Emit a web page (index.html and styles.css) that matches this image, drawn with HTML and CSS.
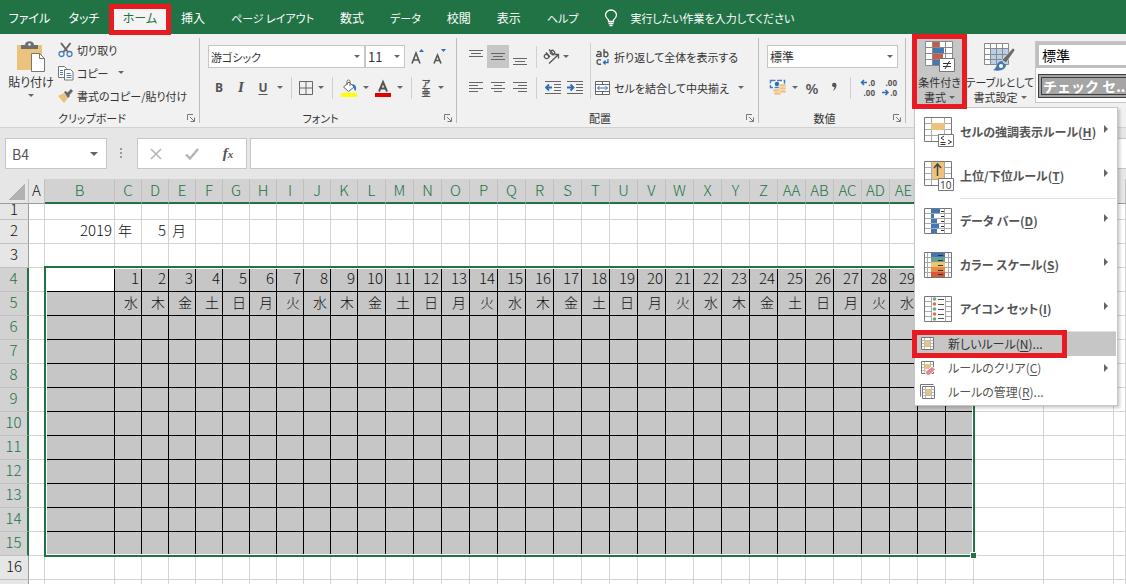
FILE: index.html
```
<!DOCTYPE html>
<html lang="ja">
<head>
<meta charset="utf-8">
<title>Excel</title>
<link rel="stylesheet" href="styles.css">
</head>
<body>
<nav class="tabs">
  <button class="tab tab-file">ファイル</button>
  <button class="tab tab-touch">タッチ</button>
  <button class="tab tab-active">ホーム</button>
  <button class="tab">挿入</button>
  <button class="tab tab-kana">ページ レイアウト</button>
  <button class="tab">数式</button>
  <button class="tab tab-kana">データ</button>
  <button class="tab">校閲</button>
  <button class="tab">表示</button>
  <button class="tab tab-kana">ヘルプ</button>
  <button class="tab tab-kana tell-me">
    <svg width="14" height="18" viewBox="0 0 14 18" fill="none" stroke="#fff" stroke-width="1.3"><path d="M4.5 12.5V11C3 9.500 1.500 8.500 1.500 6a5.500 5 0 0 1 11 0c0 2.500-1.500 3.500-3 5v1.500zM4.500 14.500h5M5.500 16.500h3"/></svg>
    実行したい作業を入力してください</button>
</nav>

<header class="ribbon">
  <section class="group g-clip">
    <div class="group-body">
      <button class="paste">
        <svg width="30" height="32" viewBox="0 0 30 32"><path d="M1 4h25v25H1z" fill="#ecc27c"/><path d="M5 8V4h4c0-5 9-5 9 0h4v4z" fill="#6d6d6d"/><circle cx="13.500" cy="3.500" r="1.300" fill="#f1f1f1"/><path d="M15.500 12.500h8l5 5v13h-13z" fill="#fff" stroke="#777"/><path d="M23.500 12.500v5h5" fill="none" stroke="#777"/></svg>
        <span>貼り付け</span><i class="caret"></i>
      </button>
      <div class="stack">
        <button class="cmd"><svg width="16" height="16" viewBox="0 0 16 16" fill="none"><path d="M3 1l7 9M12.500 1L5.500 10" stroke="#666" stroke-width="2"/><circle cx="3.500" cy="12" r="2.500" stroke="#4a7ebb" stroke-width="1.300"/><circle cx="11.500" cy="12" r="2.500" stroke="#4a7ebb" stroke-width="1.300"/></svg>切り取り</button>
        <button class="cmd"><svg width="16" height="16" viewBox="0 0 16 16" fill="#fff" stroke="#777"><path d="M.5 1.500h6l2 2v9h-8z"/><path d="M6.500 4.500h6l2.500 2.500v8H6.500z"/><path d="M2 5.500h3M2 7.500h3M2 9.500h3M8.500 8.500h4M8.500 10.500h5M8.500 12.500h5" stroke="#4a7ebb"/></svg>コピー<i class="caret caret-gap"></i></button>
        <button class="cmd"><svg width="16" height="16" viewBox="0 0 16 16"><path d="M0 8l6-3 4 5-4 5z" fill="#ecc27c"/><path d="M6 4l2-1 4 5-2 2zM9 5l4-4 2 2-3.500 4z" fill="#666"/></svg>書式のコピー/貼り付け</button>
      </div>
    </div>
    <footer class="caption">クリップボード<svg class="launch" width="9" height="9" viewBox="0 0 9 9" fill="none" stroke="#777"><path d="M.5 6V.5H6M3 3l4 4M7.500 3.500v4h-4"/></svg></footer>
  </section>

  <section class="group g-font">
    <div class="group-body col">
      <div class="line">
        <select class="combo combo-font" aria-label="フォント"><option>游ゴシック</option></select>
        <select class="combo combo-size" aria-label="サイズ"><option>11</option></select>
        <button class="tool w22 grow-a" aria-label="拡大"><svg width="14" height="17" viewBox="0 0 14 17"><path d="M1 15.500L5 5l4 10.500M2.500 12h5" fill="none" stroke="#555" stroke-width="1.600"/><path d="M8 4l2.500-3L13 4z" fill="#2f6db5"/></svg></button>
        <button class="tool w22" aria-label="縮小"><svg width="14" height="17" viewBox="0 0 14 17"><path d="M1 15.500L4.500 7 8 15.500M2.500 12.500h4" fill="none" stroke="#555" stroke-width="1.600"/><path d="M8 1l2.500 3L13 1z" fill="#2f6db5"/></svg></button>
      </div>
      <div class="line">
        <button class="tool w22 bold">B</button><button class="tool w22 ital">I</button><button class="tool w22 under">U</button><button class="tool w12" aria-label="下線"><i class="caret"></i></button>
        <i class="vsep"></i>
        <button class="tool w18" aria-label="罫線"><svg width="14" height="14" viewBox="0 0 14 14" fill="none" stroke="#666"><path d="M.5.5h13v13H.5zM7 0v14M0 7h14"/></svg></button><button class="tool w12" aria-label="罫線の種類"><i class="caret"></i></button>
        <i class="vsep"></i>
        <button class="tool w22" aria-label="塗りつぶし"><svg width="16" height="18" viewBox="0 0 16 18"><path d="M0 14h16v4H0z" fill="#ff0"/><path d="M2.500 8L8 3l5 5-5.500 4.500zM6 6V2.500C6 .5 9 .5 9 2.500V7" fill="#fff" stroke="#666"/><path d="M11 5c4 0 5 4 3.500 7-2-1-1-4-3.500-7z" fill="#3a75b8"/></svg></button><button class="tool w12" aria-label="塗りつぶしの色"><i class="caret"></i></button>
        <button class="tool w22" aria-label="文字色"><svg width="16" height="18" viewBox="0 0 16 18"><path d="M0 14h16v4H0z" fill="#e00000"/><path d="M4 12.500L8 3l4 9.500M5.500 9.500h5" fill="none" stroke="#555" stroke-width="2"/></svg></button><button class="tool w12" aria-label="フォントの色"><i class="caret"></i></button>
        <i class="vsep"></i>
        <button class="tool w18 ruby"><span>ア</span><span>亜</span></button><button class="tool w12" aria-label="ふりがな"><i class="caret"></i></button>
      </div>
    </div>
    <footer class="caption">フォント<svg class="launch" width="9" height="9" viewBox="0 0 9 9" fill="none" stroke="#777"><path d="M.5 6V.5H6M3 3l4 4M7.500 3.500v4h-4"/></svg></footer>
  </section>

  <section class="group g-align">
    <div class="group-body">
      <div class="col">
        <div class="line">
          <button class="tool w22" aria-label="上揃え"><svg width="14" height="20" viewBox="0 0 14 20" stroke="#666"><path d="M0 3.500h14M2 6.500h10M0 9.500h14"/></svg></button><button class="tool w22 on" aria-label="上下中央揃え"><svg width="14" height="20" viewBox="0 0 14 20" stroke="#666"><path d="M0 6.500h14M2 9.500h10M0 12.500h14"/></svg></button><button class="tool w22" aria-label="下揃え"><svg width="14" height="20" viewBox="0 0 14 20" stroke="#666"><path d="M0 11.500h14M2 14.500h10M0 17.500h14"/></svg></button>
          <i class="vsep"></i>
          <button class="tool w18" aria-label="方向"><svg width="17" height="17" viewBox="0 0 17 17"><g fill="none" stroke="#555" stroke-width="1.300"><ellipse cx="3.500" cy="8.500" rx="2" ry="2.300" transform="rotate(-45 3.500 8.500)"/><path d="M3 4.500l4 4.500M6 1.500l5 5.500"/><ellipse cx="9.500" cy="4.500" rx="2" ry="2.300" transform="rotate(-45 9.500 4.500)"/><path d="M6 15.500l9-8.500M11.500 6.500h4v4"/></g></svg></button><button class="tool w12" aria-label="方向の種類"><i class="caret"></i></button>
        </div>
        <div class="line">
          <button class="tool w22" aria-label="左揃え"><svg width="14" height="14" viewBox="0 0 14 14" stroke="#666"><path d="M0 1.500h14M0 4.500h9M0 7.500h14M0 10.500h9"/></svg></button><button class="tool w22" aria-label="中央揃え"><svg width="14" height="14" viewBox="0 0 14 14" stroke="#666"><path d="M0 1.500h14M3 4.500h8M0 7.500h14M3 10.500h8"/></svg></button><button class="tool w22" aria-label="右揃え"><svg width="14" height="14" viewBox="0 0 14 14" stroke="#666"><path d="M0 1.500h14M5 4.500h9M0 7.500h14M5 10.500h9"/></svg></button>
          <i class="vsep"></i>
          <button class="tool w22" aria-label="インデントを減らす"><svg width="16" height="14" viewBox="0 0 16 14" fill="none" stroke="#666"><path d="M0 .5h16M9 3.500h7M9 6.500h7M9 9.500h7M0 12.500h16"/><path d="M7 6.500H1.500M4 3.500l-3 3 3 3" stroke="#2f6db5" stroke-width="1.800"/></svg></button><button class="tool w22" aria-label="インデントを増やす"><svg width="16" height="14" viewBox="0 0 16 14" fill="none" stroke="#666"><path d="M0 .5h16M9 3.500h7M9 6.500h7M9 9.500h7M0 12.500h16"/><path d="M0 6.500h6M3.500 3.500l3 3-3 3" stroke="#2f6db5" stroke-width="1.800"/></svg></button>
        </div>
      </div>
      <i class="vsep tall"></i>
      <div class="col">
        <div class="line"><button class="cmd"><svg width="16" height="18" viewBox="0 0 16 18" fill="none"><g stroke="#555" stroke-width="1.400"><path d="M2 4c2-1 4-.5 4 1v4M6 6C3 6 1.500 6.500 1.500 7.500S5 9.500 6 7.500M9 1v8M9 5c2-2 4-.5 4 1.500S11 9.500 9 8M6 12c-2.500-1-4 0-4 2s2 3 4 2"/></g><path d="M13 11v3.500H8.500M10.500 12.500l-2 2 2 2" stroke="#2f6db5" stroke-width="1.300"/></svg>折り返して全体を表示する</button></div>
        <div class="line"><button class="cmd"><svg width="16" height="16" viewBox="0 0 16 16" fill="#fff" stroke="#666"><path d="M.5 1.500h14v13H.5zM.5 4.500h14M.5 11.500h14M7.500 1.500v3M7.500 11.500v3"/><path d="M2.500 8h10M4.500 6l-2 2 2 2M10.500 6l2 2-2 2" fill="none" stroke="#2f6db5"/></svg>セルを結合して中央揃え<i class="caret caret-gap"></i></button></div>
      </div>
    </div>
    <footer class="caption">配置<svg class="launch" width="9" height="9" viewBox="0 0 9 9" fill="none" stroke="#777"><path d="M.5 6V.5H6M3 3l4 4M7.500 3.500v4h-4"/></svg></footer>
  </section>

  <section class="group g-num">
    <div class="group-body col">
      <div class="line"><select class="combo combo-num" aria-label="表示形式"><option>標準</option></select></div>
      <div class="line">
        <button class="tool w22" aria-label="通貨"><svg width="18" height="17" viewBox="0 0 18 17"><path d="M1.500 1.500h14v7h-14z" fill="#fff" stroke="#4a7ebb" stroke-width="1.500" stroke-dasharray="5 1.500"/><circle cx="8" cy="5" r="2.300" fill="#2f6db5"/><g fill="#ecc27c" stroke="#f1f1f1" stroke-width=".6"><rect x="10" y="5" width="7" height="3" rx="1"/><rect x="10" y="8" width="7" height="3" rx="1"/><rect x="10" y="11" width="7" height="3" rx="1"/><rect x="4" y="10" width="7" height="3" rx="1"/><rect x="5" y="13" width="7" height="3" rx="1"/></g></svg></button><button class="tool w12" aria-label="通貨の種類"><i class="caret"></i></button><button class="tool w22 percent">%</button><button class="tool w22" aria-label="桁区切り"><svg width="7" height="12" viewBox="0 0 7 12"><path d="M1 3a2 2 0 1 1 4.500 0C5.500 6 4 8 1.500 9 3 7.500 3.500 6 3.500 5 2 5 1 4.500 1 3z" fill="#555"/></svg></button>
        <i class="vsep"></i>
        <button class="tool w22 dec"><span><svg class="dec-arrow" width="8" height="7" viewBox="0 0 8 7"><path d="M7 3.500H1.500M4 1L1.500 3.500 4 6"/></svg>.0</span><span>.00</span></button><button class="tool w22 dec"><span>.00</span><span><svg class="dec-arrow" width="8" height="7" viewBox="0 0 8 7"><path d="M0 3.500h6M3.500 1L6 3.500 3.500 6"/></svg>.0</span></button>
      </div>
    </div>
    <footer class="caption">数値<svg class="launch" width="9" height="9" viewBox="0 0 9 9" fill="none" stroke="#777"><path d="M.5 6V.5H6M3 3l4 4M7.500 3.500v4h-4"/></svg></footer>
  </section>

  <section class="group g-style">
    <div class="cond-wrap">
      <button class="big cond">
        <svg width="30" height="31" viewBox="0 0 30 31"><path d="M.5.5h27v24H.5z" fill="#fff"/><path d="M.5.5h27v24H.5zM.5 6.500h27M.5 12.500h27M.5 18.500h27M7.500 0v24M14.500 0v24M20.500 0v24" fill="none" stroke="#8a8a8a"/><path d="M8 1h6v5H8zM8 13h10v5H8z" fill="#cc5b45"/><path d="M8 7h11v5H8zM8 19h6v5H8z" fill="#3f78b4"/><path d="M14.500 17.500h15v13h-15z" fill="#fff" stroke="#777"/><path d="M18 22.500h8M18 25.500h8M24.500 20l-4.500 8" stroke="#333" fill="none"/></svg>
        <span>条件付き</span><span>書式<i class="caret"></i></span>
      </button>
      <div class="menu" role="menu">
        <button class="item large"><svg width="31" height="31" viewBox="0 0 31 31"><path d="M.5.5h27v24H.5z" fill="#fff"/><path d="M.5 6.500h27M.5 12.500h27M.5 18.500h27M7.500 0v24M20.500 0v24" fill="none" stroke="#aaa"/><path d="M.5.5h27v24H.5z" fill="none" stroke="#777"/><path d="M7 6h14v7H7z" fill="#ecc27c" /><path d="M14.500 17.500h15v12h-15z" fill="#fff" stroke="#777"/><path d="M20 19l-3 2 3 2M16.500 25.500h5M16.500 27.500h5M24 23l3.500 2-3.500 2" stroke="#333" fill="none"/></svg><span>セルの強調表示ルール(<u>H</u>)</span><i class="arrow"></i></button>
        <button class="item large"><svg width="31" height="31" viewBox="0 0 31 31"><path d="M.5.5h27v24H.5z" fill="#fff"/><path d="M7 1h14v18H7z" fill="#ecc27c"/><path d="M.5 6.500h27M.5 12.500h27M.5 18.500h27M7.500 0v24M20.500 0v24" fill="none" stroke="#aaa"/><path d="M8 1h12v17H8z" fill="#ecc27c"/><path d="M.5.5h27v24H.5z" fill="none" stroke="#777"/><path d="M13.500 15V3M10 7l3.500-4L17 7" fill="none" stroke="#444" stroke-width="1.500"/><path d="M14.500 17.500h15v12h-15z" fill="#fff" stroke="#777"/><text x="16" y="28" class="ten">10</text></svg><span>上位/下位ルール(<u>T</u>)</span><i class="arrow"></i></button>
        <hr class="indent">
        <button class="item large"><svg width="31" height="26" viewBox="0 0 31 26"><path d="M.5.5h27v25H.5z" fill="#fff"/><path d="M.5 5.500h27M.5 10.500h27M.5 15.500h27M.5 20.500h27M7.500 0v25M20.500 0v25" stroke="#aaa"/><path d="M7 1h9v4H7zM7 6h3v4H7zM7 11h6v4H7zM7 16h8v4H7zM7 21h6v4H7z" fill="#3f78b4"/><path d="M17 3.500h3M17 8.500h3M17 13.500h3M17 18.500h3M17 22.500h3" stroke="#333"/><path d="M.5.5h27v25H.5z" fill="none" stroke="#777"/></svg><span>データ バー(<u>D</u>)</span><i class="arrow"></i></button>
        <button class="item large"><svg width="31" height="26" viewBox="0 0 31 26"><path d="M.5.5h27v25H.5z" fill="#fff"/><path d="M.5 5.500h27M.5 10.500h27M.5 15.500h27M.5 20.500h27M3.500 0v25M24.500 0v25" stroke="#aaa"/><path d="M7 0h14v5H7z" fill="#3f78b4"/><path d="M7 5h14v5H7z" fill="#6f9f94"/><path d="M7 10h14v5H7z" fill="#efc475"/><path d="M7 15h14v5H7z" fill="#e08f45"/><path d="M7 20h14v5H7z" fill="#d65a37"/><path d="M14 3.500h5M14 8.500h5M14 13.500h5M14 18.500h5M14 22.500h5" stroke="#333"/><path d="M.5.5h27v25H.5z" fill="none" stroke="#777"/></svg><span>カラー スケール(<u>S</u>)</span><i class="arrow"></i></button>
        <button class="item large"><svg width="31" height="26" viewBox="0 0 31 26"><path d="M.5.5h27v25H.5z" fill="#fff"/><path d="M.5 5.500h27M.5 10.500h27M.5 15.500h27M.5 20.500h27M7.500 0v25M21.500 0v25" stroke="#aaa"/><path d="M8 1h13v24H8z" fill="#fff"/><g fill="#6aa58c"><circle cx="10.500" cy="3" r="1.800"/><circle cx="10.500" cy="13" r="1.800"/><circle cx="10.500" cy="23" r="1.800"/></g><g fill="#d9713f"><circle cx="10.500" cy="8" r="1.800"/><circle cx="10.500" cy="18" r="1.800"/></g><path d="M14 3.500h6M14 8.500h6M14 13.500h6M14 18.500h6M14 22.500h6" stroke="#555"/><path d="M.5.5h27v25H.5z" fill="none" stroke="#777"/></svg><span>アイコン セット(<u>I</u>)</span><i class="arrow"></i></button>
        <hr>
        <button class="item small hot"><svg width="16" height="16" viewBox="0 0 16 16" fill="#fff" stroke="#777"><path d="M1.500 1.500h12v12h-12z"/><path d="M2 4.500h11M2 7.500h11M2 10.500h11M4.500 2v11M10.500 2v11" stroke="#bbb"/><path d="M5 5h5v5H5z" fill="#ecc27c" stroke="none"/></svg><span>新しいルール(<u>N</u>)...</span><i class="marker"></i></button>
        <button class="item small"><svg width="16" height="16" viewBox="0 0 16 16" fill="#fff" stroke="#777"><path d="M1.500 1.500h12v12h-12z"/><path d="M2 4.500h11M2 7.500h11M2 10.500h11M4.500 2v11M10.500 2v11" stroke="#bbb"/><path d="M5 4h5v5H5z" fill="#ecc27c" stroke="none"/><path d="M5 12l7-5.500 3.500 3L9 15.500H7z" fill="#e8839b" stroke="#fff"/></svg><span>ルールのクリア(<u>C</u>)</span><i class="arrow"></i></button>
        <button class="item small"><svg width="16" height="16" viewBox="0 0 16 16" fill="#fff" stroke="#777"><path d="M.5 12.500V.5h13" fill="none"/><path d="M2.500 2.500h12v12h-12z"/><path d="M3 5.500h11M3 8.500h11M3 11.500h11M5.500 3v11M11.500 3v11" stroke="#bbb"/><path d="M6 6h5v5H6z" fill="#ecc27c" stroke="none"/></svg><span>ルールの管理(<u>R</u>)...</span></button>
      </div>
    </div>
    <button class="big fmt">
      <svg width="32" height="31" viewBox="0 0 32 31"><path d="M.5.500h24v21H.5z" fill="#fff"/><path d="M7 6h18v16H7z" fill="#b9cfe8"/><path d="M.5.500h24v21H.5zM.5 5.500h24M.5 11.500h24M.5 16.500h24M6.500 0v22M12.500 0v22M18.500 0v22" fill="none" stroke="#8a8a8a"/><path d="M29 5l2 2-9 13-4-3z" fill="#6a6a6a" stroke="#f1f1f1" stroke-width=".6"/><path d="M17 18l5 4c0 4-6 7-13 5 4-1 3-8 8-9z" fill="#3f78b4"/><circle cx="17" cy="23" r="2" fill="#fff"/></svg>
      <span>テーブルとして</span><span>書式設定<i class="caret"></i></span>
    </button>
    <div class="gallery">
      <button class="swatch normal">標準</button>
      <button class="swatch check">チェック セ...</button>
    </div>
  </section>
</header>

<div class="formula-bar">
  <label class="name-box"><input type="text" value="B4" aria-label="名前ボックス"><i class="caret caret-big"></i></label>
  <svg class="grip" width="3" height="12" viewBox="0 0 3 12" fill="#999"><path d="M0 0h2v2H0zM0 4h2v2H0zM0 8h2v2H0z"/></svg>
  <div class="fx-box">
    <button class="fx-btn" aria-label="キャンセル"><svg width="12" height="12" viewBox="0 0 12 12" stroke="#b5b5b5" stroke-width="1.600"><path d="M1 1l10 10M11 1L1 11"/></svg></button>
    <button class="fx-btn" aria-label="入力"><svg width="14" height="12" viewBox="0 0 14 12" fill="none" stroke="#b5b5b5" stroke-width="2.400"><path d="M1 6.500l4 4L13 1"/></svg></button>
    <button class="fx-btn fx"><span>f</span><sub>x</sub></button>
  </div>
  <input class="formula" type="text" aria-label="数式バー">
</div>

<main class="sheet">
  <table class="grid" id="grid"></table>
  <div class="selection"><i class="handle"></i></div>
</main>
<script src="grid.js"></script>
</body>
</html>
```
FILE: styles.css
```
* { box-sizing: border-box; }
html, body { height: 100%; }
body {
  margin: 0;
  display: flex;
  flex-direction: column;
  overflow: hidden;
  background: #e6e6e6;
  color: #333;
  font-family: "Noto Sans CJK JP", sans-serif;
  font-size: 12px;
  line-height: 16px;
  font-feature-settings: "palt";
}
button, input, select {
  font: inherit;
  font-feature-settings: inherit;
  color: inherit;
  background: none;
  border: 0;
  padding: 0;
  margin: 0;
  white-space: nowrap;
}
svg { flex: none; display: block; }

.tabs { display: flex; flex: none; height: 34px; background: #217346; color: #fff; }
.tab { padding: 2px 13px 0; }
.tab-kana { font-size: 11px; }
.tab-file { width: 59px; padding: 2px 0 0; }
.tab-touch { width: 50px; padding: 2px 0 0; }
.tab-active {
  position: relative;
  z-index: 2;
  width: 62px;
  height: 31px;
  margin: 4px -3px 0 0;
  padding: 0 0 4px;
  background: #f4f4f4;
  border: 5px solid #e81b23;
  color: #217346;
}
.tell-me { display: flex; align-items: center; gap: 12px; }

.ribbon { display: flex; flex: none; height: 94px; background: #f1f1f1; border-bottom: 1px solid #d2d2d2; }
.group { display: flex; flex-direction: column; flex: none; position: relative; padding-top: 4px; }
.group::after { content: ""; position: absolute; right: 0; top: 4px; bottom: 4px; border-right: 1px solid #bdbdbd; }
.group-body { display: flex; flex: 1; }
.col { display: flex; flex-direction: column; padding-top: 3px; }
.line { display: flex; align-items: center; height: 31px; }
.caption { display: flex; justify-content: center; align-items: center; height: 18px; padding-right: 16px; position: relative; font-size: 11px; }
.launch { position: absolute; right: 4px; bottom: 4px; }
.g-clip { width: 200px; }
.g-font { width: 257px; }
.g-font .col, .g-num .col { padding-left: 8px; }
.g-align { width: 302px; }
.g-align .group-body { padding-left: 8px; }
.g-num { width: 147px; }
.g-style { flex: 1; flex-direction: row; min-width: 0; padding: 0 0 0 6px; }
.g-style::after { display: none; }

.caret { width: 0; height: 0; border: 3px solid transparent; border-top-color: #666; border-bottom: 0; display: inline-block; flex: none; }
.caret-gap { margin-left: 6px; }
.caret-big { border-width: 4px; border-bottom: 0; }
.vsep { width: 1px; height: 22px; margin: 0 5px; background: #d0d0d0; flex: none; }
.tall { height: 56px; margin: 5px 4px 0; }

.paste { width: 58px; display: flex; flex-direction: column; align-items: center; padding: 3px 0 0 4px; }
.paste span { padding-top: 1px; }
.paste .caret { margin-top: 4px; }
.stack { display: flex; flex-direction: column; }
.cmd { display: flex; align-items: center; height: 23px; gap: 3px; font-size: 11px; }

.combo {
  appearance: none;
  height: 23px;
  padding: 0 2px;
  border: 1px solid #c6c6c6;
  background: #fff url("data:image/svg+xml,%3Csvg xmlns='http://www.w3.org/2000/svg' width='6' height='3'%3E%3Cpath d='M0 0h6L3 3z' fill='%23666'/%3E%3C/svg%3E") no-repeat right 4px center;
  border-radius: 0;
}
.combo-font { width: 157px; font-size: 11px; }
.combo-size { width: 40px; font-size: 13px; }
.combo-num { width: 131px; }
.tool { display: flex; align-items: center; justify-content: center; height: 23px; flex: none; color: #555; }
.w12 { width: 12px; }
.w18 { width: 18px; }
.w22 { width: 22px; }
.grow-a { margin-left: 2px; }
.on { background: #c6c6c6; }
.bold { font: bold 12px "Open Sans", sans-serif; }
.ital { font: italic bold 12px "DejaVu Serif", serif; }
.under { font: bold 12px "Open Sans", sans-serif; text-decoration: underline; text-underline-offset: 2px; }
.ruby { flex-direction: column; font-size: 9px; line-height: 9px; font-weight: 700; }
.percent { font: 600 15px "Open Sans", sans-serif; }
.dec { flex-direction: column; align-items: flex-end; padding-right: 3px; font: bold 8px/10px "Open Sans", sans-serif; }
.dec span { display: flex; align-items: center; }
.dec-arrow { fill: none; stroke: #2f6db5; stroke-width: 1.5; }

.cond-wrap { position: relative; }
.big { display: flex; flex-direction: column; align-items: center; flex: none; line-height: 15px; font-size: 11px; }
.big svg { margin-bottom: 3px; }
.big .caret { margin: 0 0 3px 3px; }
.cond { width: 55px; height: 75px; background: #c6c6c6; border: 5px solid #e81b23; padding-top: 2px; position: relative; z-index: 2; }
.fmt { width: 66px; padding-top: 9px; height: 75px; margin-right: 2px; }
.fmt svg { margin-bottom: 1px; }
.gallery { flex: 1; height: 62px; margin-top: 7px; background: #fff; border: 1px solid #c6c6c6; border-right: 0; overflow: hidden; }
.swatch { display: block; width: 140px; text-align: left; font-size: 14px; }
.normal { height: 26px; border: 3px solid #c0c0c0; padding-left: 3px; background: #fff; color: #000; }
.check { height: 24px; margin: 6px 0 0 2px; border: 4px double #3f3f3f; background: #a5a5a5; padding-left: 1px; color: #fff; font-weight: 700; line-height: 14px; font-feature-settings: normal; }

.menu {
  position: absolute;
  top: 73px;
  left: 2px;
  width: 204px;
  padding: 2px 1px 1px;
  background: #fff;
  border: 1px solid #c6c6c6;
  box-shadow: 2px 2px 3px rgba(0, 0, 0, .2);
  z-index: 1;
}
.menu hr { margin: 0; border: 0; border-top: 1px solid #e1e1e1; }
.menu .indent { margin-left: 44px; }
.item { position: relative; display: flex; align-items: center; width: 100%; color: #555; }
.large { height: 44px; padding-left: 8px; gap: 5px; font-weight: 700; }
.small { height: 24px; padding-left: 4px; gap: 12px; }
.item .arrow { margin: 0 8px 6px auto; border: 4px solid transparent; border-left: 4px solid #666; border-right: 0; }
.small .arrow { margin-bottom: 0; }
.item u { text-underline-offset: 2px; }
.hot { background: #c6c6c6; color: #333; }
.marker { position: absolute; left: -4px; top: -2px; width: 155px; height: 28px; border: 5px solid #e81b23; }
.ten { font: 10px "Open Sans", sans-serif; fill: #333; }

.formula-bar { display: flex; flex: none; height: 51px; padding: 10px 0 10px 5px; }
.name-box { display: flex; align-items: center; width: 102px; background: #fff; border: 1px solid #c6c6c6; padding: 0 8px 0 6px; }
.name-box input { flex: 1; min-width: 0; font-size: 14px; color: #555; }
.grip { margin: 10px 14px 0 13px; }
.fx-box { display: flex; justify-content: space-around; width: 110px; background: #fff; border: 1px solid #c6c6c6; }
.fx-btn { width: 36px; display: flex; align-items: center; justify-content: center; }
.fx { font: italic bold 15px "Liberation Serif", serif; color: #555; }
.fx sub { font-size: 11px; }
.formula { flex: 1; min-width: 0; margin-left: 3px; background: #fff; border: 1px solid #c6c6c6; border-right: 0; }

.sheet { position: relative; flex: 1; min-height: 0; overflow: hidden; background: #fff; }
.grid { width: 100%; table-layout: fixed; border-collapse: separate; border-spacing: 0; font-size: 15px; line-height: 20px; font-feature-settings: normal; font-weight: 300; color: #111; }
.c-head { width: 29px; }
.c-a { width: 16px; }
.c-b, .c-wide { width: 70px; }
.c-day { width: 27px; }
.c-day2 { width: 28px; }
.grid th, .grid td { height: 24px; padding: 0; border: 0 solid #d4d4d4; border-width: 0 1px 1px 0; overflow: hidden; white-space: nowrap; vertical-align: top; }
.grid td { text-align: right; padding-right: 2px; }
.grid td.left { text-align: left; padding-left: 3px; font-size: 14px; }
.grid th { background: #e6e6e6; font-weight: inherit; border-color: #c0c0c0; }
.grid thead th { height: 25px; line-height: 22px; border-bottom-color: #9b9b9b; }
.grid tbody th { border-right-color: #9b9b9b; }
.grid thead th.sel { background: #d2d2d2; color: #217346; border-bottom: 2px solid #217346; }
.grid tbody th.sel { background: #d2d2d2; color: #217346; border-right: 2px solid #217346; }
.grid .corner { background: linear-gradient(135deg, transparent 50%, #b2b2b2 50%) no-repeat 8px 4px / 17px 17px #e6e6e6; }
.grid tr.first th, .grid tr.first td { height: 16px; line-height: 10px; }
.grid td.in { background: #c6c6c6; border-color: #000; }
.grid td.active { background: #fff; }
.grid td.name { font-size: 14px; padding-right: 3px; }
.selection { position: absolute; left: 44px; top: 87px; width: 931px; height: 291px; border: 2px solid #217346; box-shadow: inset 0 0 0 1px #fff; }
.handle { position: absolute; right: -4px; bottom: -4px; width: 7px; height: 7px; background: #217346; border: 1px solid #fff; }
```
FILE: grid.js
```
const cols = [];
for (let i = 0; i < 36; i++) {
  cols.push(i < 26 ? String.fromCharCode(65 + i) : "A" + String.fromCharCode(39 + i));
}
const LAST = 32;
const week = "水木金土日月火";

function widthClass(i) {
  if (i === 0) return "c-a";
  if (i === 1) return "c-b";
  if (i <= 10) return "c-day";
  if (i <= LAST) return "c-day2";
  return i < 35 ? "c-wide" : "";
}

function cell(r, i) {
  let text = "";
  const cls = [];
  if (r === 2) {
    text = { 1: "2019", 2: "年", 3: "5", 4: "月" }[i] || "";
    if (i === 2 || i === 4) cls.push("left");
  }
  if (r >= 4 && r <= 15 && i >= 1 && i <= LAST) {
    cls.push("in");
    if (r === 4 && i === 1) cls.push("active");
    if (r === 4 && i > 1) text = i - 1;
    if (r === 5 && i > 1) { text = week[(i - 2) % 7]; cls.push("name"); }
  }
  return `<td class="${cls.join(" ")}">${text}</td>`;
}

let html = '<colgroup><col class="c-head">' +
  cols.map((c, i) => `<col class="${widthClass(i)}">`).join("") + "</colgroup>";
html += '<thead><tr><th class="corner"></th>' +
  cols.map((c, i) => `<th class="${i >= 1 && i <= LAST ? "sel" : ""}">${i < 35 ? c : ""}</th>`).join("") +
  "</tr></thead><tbody>";
for (let r = 1; r <= 17; r++) {
  html += `<tr class="${r === 1 ? "first" : ""}"><th class="${r >= 4 && r <= 15 ? "sel" : ""}">${r < 17 ? r : ""}</th>` +
    cols.map((c, i) => cell(r, i)).join("") + "</tr>";
}
document.getElementById("grid").innerHTML = html + "</tbody>";
```
